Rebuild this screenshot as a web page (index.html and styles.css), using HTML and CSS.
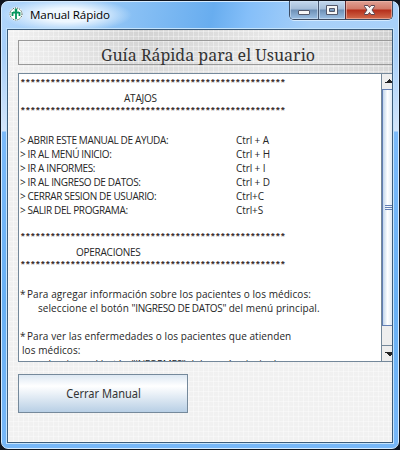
FILE: index.html
```html
<!DOCTYPE html>
<html lang="es">
<head>
<meta charset="utf-8">
<title>Manual Rápido</title>
<link rel="stylesheet" href="styles.css">
</head>
<body>
<div class="window">
  <header class="titlebar">
    <svg class="logo" width="14" height="14" viewBox="0 0 14 14"><circle cx="7" cy="7" r="6.8" fill="#fff"/><circle cx="7" cy="7" r="6" fill="none" stroke="#284d42" stroke-dasharray="1.2 1"/><path d="M7 3v9M4 5.500h6M3.500 5v4M10.500 5v4" stroke="#07965d" stroke-width="1.8" fill="none"/><circle cx="7" cy="3" r="1.4" fill="#07965d"/></svg>
    <span class="title">Manual Rápido</span>
    <div class="controls">
      <span class="ctl"><svg width="28" height="18"><rect x="8.500" y="9.500" width="11" height="4" rx=".5" fill="#f6f6f6" stroke="#53586b"/></svg></span>
      <span class="ctl mid"><svg width="26" height="18"><path fill-rule="evenodd" d="M7.500 4.500h11v9h-11zM10.500 7.500v3h5v-3z" fill="#f6f6f6" stroke="#53586b"/></svg></span>
      <span class="ctl close"><svg width="47" height="18"><path d="M18.500 4.500h3.500l1.500 2 1.500-2h3.500v1L26 9l2.500 3.500v1H25l-1.500-2-1.500 2h-3.500v-1L21 9l-2.500-3.500z" fill="#f6f6f6" stroke="#5b4550"/></svg></span>
    </div>
  </header>
  <main class="client">
    <h1 class="heading"><span>Guía Rápida para el Usuario</span></h1>
    <section class="scrollpane">
      <div class="text">
        <p class="stars">*****************************************************</p>
        <p class="head1">ATAJOS</p>
        <p class="stars">*****************************************************</p>
        <p></p>
        <p class="key"><span class="caps">&gt; ABRIR ESTE MANUAL DE AYUDA:</span><span>Ctrl + A</span></p>
        <p class="key"><span class="caps">&gt; IR AL MENÚ INICIO:</span><span>Ctrl + H</span></p>
        <p class="key"><span class="caps">&gt; IR A INFORMES:</span><span>Ctrl + I</span></p>
        <p class="key"><span class="caps">&gt; IR AL INGRESO DE DATOS:</span><span>Ctrl + D</span></p>
        <p class="key"><span class="caps">&gt; CERRAR SESION DE USUARIO:</span><span>Ctrl+C</span></p>
        <p class="key"><span class="caps">&gt; SALIR DEL PROGRAMA:</span><span>Ctrl+S</span></p>
        <p></p>
        <p class="stars">*****************************************************</p>
        <p class="head2">OPERACIONES</p>
        <p class="stars">*****************************************************</p>
        <p></p>
        <p class="body"><span class="bullet">*</span>Para agregar información sobre los pacientes o los médicos:</p>
        <p class="body indent">seleccione el botón <span class="caps">"INGRESO DE DATOS"</span> del menú principal.</p>
        <p></p>
        <p class="body"><span class="bullet">*</span>Para ver las enfermedades o los pacientes que atienden</p>
        <p class="body second">los médicos:</p>
        <p class="body indent">seleccione el botón <span class="caps">"INFORMES"</span> del menú principal.</p>
      </div>
      <div class="scrollbar">
        <span class="arrow"><svg width="10" height="15"><path d="M3 9h8v-1h-1v-1h-1v-1h-1v-1h-1v1h-1v1h-1v1h-2z" fill="#222"/></svg></span>
        <span class="thumb"><i></i><i></i><i></i></span>
        <span class="track"></span>
        <span class="arrow down"><svg width="10" height="14"><path d="M3 6h9v1h-1v1h-1v1h-1v1h-2v-1h-1v-1h-1v-1h-2z" fill="#222"/></svg></span>
      </div>
    </section>
    <button class="button"><span>Cerrar Manual</span></button>
  </main>
</div>
</body>
</html>
```
FILE: styles.css
```css
* { box-sizing: border-box; }
body { margin: 0; width: 400px; height: 450px; overflow: hidden; background: #10151f; font-family: "Open Sans", "Noto Sans", sans-serif; }
.window {
  width: 398px; height: 448px; margin: 1px; padding: 0 6px 6px 5px;
  border: 1px solid #d5ebff; border-radius: 7px;
  background:
    radial-gradient(ellipse 65px 17px at 65px 13px, #eef7ff 40%, transparent 100%) no-repeat,
    linear-gradient(100deg, #b0d5fb 0, #91c5f6 28%, #68adef 53%, #85bff9 62%, #a8d0f8 78%, #a9d1fa) 0 0 / 100% 28px no-repeat,
    linear-gradient(#a8d0fa 0, #a7cff9 50px, #d3e5fa 129px, #7bbafa 130px, #68b0f4 300px, #77b7f8);
}
.titlebar { display: flex; height: 27px; }
.logo { margin: 5px 0 0 2px; }
.title { flex: 1; margin: 4px 0 0 7px; font-size: 11.6px; line-height: 17px; letter-spacing: -.1px; color: #000; white-space: nowrap; }
.controls { display: flex; height: 19px; margin: -1px -1px 0 0; width: 104px; border: 1px solid #3b4b63; border-top: 0; border-radius: 0 0 5px 5px; overflow: hidden; box-shadow: 0 1px 0 #d4eaff; }
.ctl { width: 28px; height: 18px; background: linear-gradient(#c4d8ee 0, #a4bdd9 8px, #6e90b6 9px, #9cc0e4 18px); box-shadow: inset 0 0 0 1px #d3e3f4a0; }
.ctl svg { display: block; }
.mid { width: 27px; border-left: 1px solid #46556f; }
.close { width: 47px; border-left: 1px solid #5b2830; background: linear-gradient(#e0a195 0, #d27a69 8px, #b52e1b 9px, #d36b4c 18px); box-shadow: inset 0 0 0 1px #f0bcb0a0; }
.client {
  width: 386px; height: 414px; padding: 10px 0 0 10px; overflow: hidden;
  border: 1px solid #3c5c7b; box-shadow: 0 0 0 1px #c4e3fc;
  background:
    repeating-linear-gradient(0deg, #ffffff58 0 1px, transparent 1px 5px),
    repeating-linear-gradient(90deg, #ffffff58 0 1px, transparent 1px 5px),
    linear-gradient(#f0f0f000 0, #f0f0f0 130px, #f1f1f1),
    linear-gradient(90deg, #f2f2f2, #d2d2d2 35%, #dadada 50%, #e9e9e9 70%, #cecece);
}
.heading { width: 380px; height: 25px; margin: 0; border: 1px solid #999; font: 16.5px/27px "Noto Serif", "DejaVu Serif", serif; color: #333; text-align: left; padding-left: 82px; white-space: nowrap; }
.heading span { display: inline-block; transform: scaleX(.97); transform-origin: left; }
.scrollpane { display: flex; width: 380px; height: 289px; margin-top: 8px; border: 1px solid #74889a; background: #fff; overflow: hidden; }
.text { flex: 0 0 362px; height: 287px; padding: 3px 0 0 1px; overflow: hidden; color: #262626; font-size: 10px; line-height: 14px; }
.text p { height: 14px; margin: 0; white-space: pre; }
.text .stars { font: bold 9.5px/14px "Liberation Mono", monospace; letter-spacing: -.701px; color: #3a302c; }
.text .head1 { padding-left: 104px; letter-spacing: -.2px; }
.text .head2 { padding-left: 56px; letter-spacing: -.25px; }
.key { display: flex; letter-spacing: -.1px; }
.key .caps { width: 216px; }
.caps { letter-spacing: -.36px; }
.body { letter-spacing: .07px; }
.bullet { display: inline-block; width: 7px; }
.text .indent { padding-left: 18px; }
.text .second { padding-left: 2px; }
.scrollbar { display: flex; flex-direction: column; width: 17px; border-left: 1px solid #74889a; background: #eee; }
.arrow { height: 15px; background: #eee; }
.arrow svg { display: block; }
.thumb { height: 237px; border: 1px solid #627fb4; padding-top: 115px; background: linear-gradient(90deg, #c2d6eb, #fff 35%, #c5d9ed); }
.thumb i { display: block; width: 8px; height: 1px; margin: 0 0 1px 2px; background: #627fb4; }
.track { height: 19px; }
.down { height: 16px; border-top: 1px solid #74889a; }
.button { display: block; width: 170px; height: 39px; margin-top: 12px; padding: 0; border: 1px solid #75899b; background: linear-gradient(#dde8f3, #fff 30%, #b8cfe5); color: #333; font: 12px/37px "Noto Sans", sans-serif; }
.button span { display: inline-block; transform: translateX(1px) scaleX(.92); }
```
